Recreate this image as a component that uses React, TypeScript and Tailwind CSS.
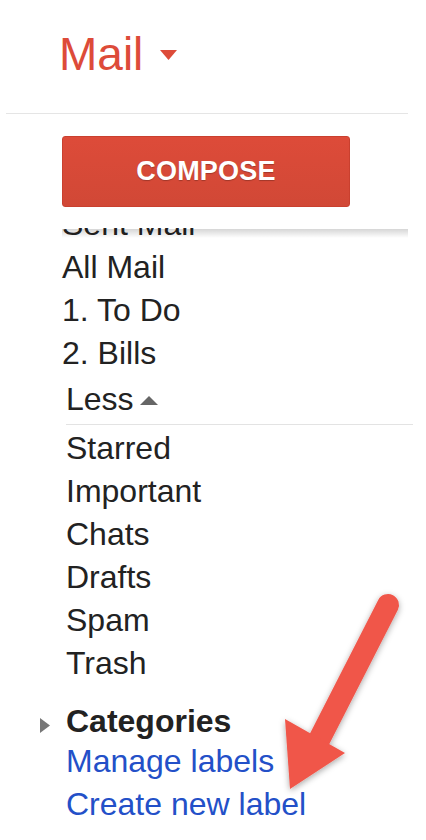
import React from "react";

const font = { fontFamily: '"Liberation Sans", Arial, Helvetica, sans-serif' };

function Item({ children, className = "" }: { children: React.ReactNode; className?: string }) {
  return <div className={`h-[43px] text-[32px] leading-[43px] text-[#222] whitespace-nowrap ${className}`}>{children}</div>;
}

export default function App() {
  return (
    <div className="relative w-[426px] h-[840px] overflow-hidden bg-white" style={font}>
      {/* Header */}
      <div className="pt-[28px] pl-[59px] flex items-center h-[80px]">
        <span className="text-[46px] leading-[52px] text-[#dd4b39]">Mail</span>
        <svg width="17" height="10" viewBox="0 0 17 10" className="ml-[17px] mt-[2px]">
          <polygon points="0,0 17,0 8.5,10" fill="#dd4b39" />
        </svg>
      </div>
      <div className="mt-[33px] ml-[6px] w-[402px] h-px bg-[#e5e5e5]" />

      {/* Compose */}
      <div className="mt-[22px] ml-[62px] w-[288px] h-[71px] rounded-[3px] border border-[#c9402f] bg-gradient-to-b from-[#dd4b39] to-[#d14836] flex items-center justify-center">
        <span className="text-[27px] font-bold text-white tracking-[0.2px] [text-shadow:0_1px_1px_rgba(0,0,0,0.25)]">COMPOSE</span>
      </div>

      {/* Label list */}
      <div className="relative mt-[21px] h-[612px] overflow-hidden">
        <div className="-mt-[25px]">
          <div className="pl-[62px]">
            <Item>Sent Mail</Item>
            <Item>All Mail</Item>
            <Item>1. To Do</Item>
            <Item>2. Bills</Item>
          </div>
          <div className="pl-[66px]">
            <Item className="mt-[3px] flex items-center">
              <span>Less</span>
              <svg width="18" height="9" viewBox="0 0 18 9" className="ml-[6px] mt-[2px]">
                <polygon points="0,9 18,9 9,0" fill="#666" />
              </svg>
            </Item>
          </div>
          <div className="mt-[3px] ml-[66px] w-[347px] h-px bg-[#e3e3e3]" />
          <div className="pl-[66px] mt-[2px]">
            <Item>Starred</Item>
            <Item>Important</Item>
            <Item>Chats</Item>
            <Item>Drafts</Item>
            <Item>Spam</Item>
            <Item>Trash</Item>
          </div>
          <div className="mt-[15px] flex">
            <div className="w-[66px] flex items-start pl-[40px] pt-[18px]">
              <svg width="10" height="15" viewBox="0 0 10 15">
                <polygon points="0,0 10,7.5 0,15" fill="#777" />
              </svg>
            </div>
            <div className="h-[40px] text-[32px] leading-[43px] font-bold text-[#222]">Categories</div>
          </div>
          <div className="pl-[66px]">
            <Item className="!text-[#2350c8]">Manage labels</Item>
            <Item className="!text-[#2350c8]">Create new label</Item>
          </div>
        </div>
        {/* scroll shadow */}
        <div className="absolute top-[1px] left-[62px] w-[346px] h-[9px] bg-gradient-to-b from-[rgba(0,0,0,0.16)] to-transparent" />
      </div>

      {/* Annotation arrow */}
      <svg className="absolute left-0 top-0 pointer-events-none" width="426" height="840" viewBox="0 0 426 840">
        <defs>
          <filter id="sh" x="-20%" y="-20%" width="140%" height="140%">
            <feDropShadow dx="0" dy="2" stdDeviation="3" floodColor="#000" floodOpacity="0.35" />
          </filter>
        </defs>
        <g filter="url(#sh)">
          <line x1="388" y1="605" x2="318" y2="742" stroke="#f0564a" strokeWidth="22" strokeLinecap="round" />
          <polygon points="285,719 345,753 290,789" fill="#f0564a" />
        </g>
      </svg>
    </div>
  );
}
